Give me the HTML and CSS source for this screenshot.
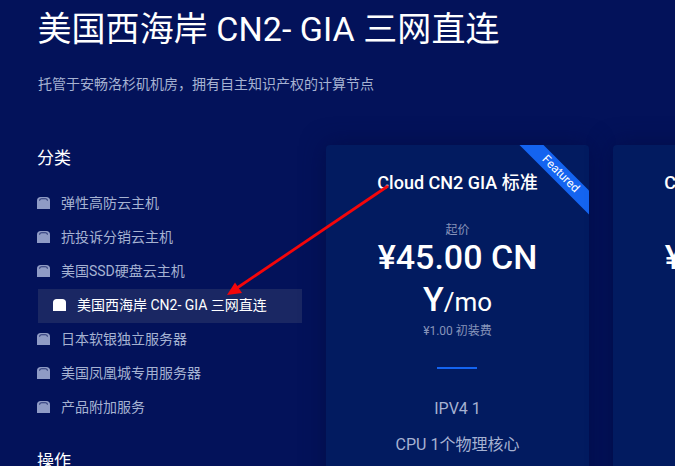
FILE: index.html
```html
<!DOCTYPE html>
<html lang="zh-CN">
<head>
<meta charset="utf-8">
<title>美国西海岸 CN2- GIA 三网直连</title>
<link rel="stylesheet" href="styles.css">
</head>
<body>
<svg width="0" height="0" class="defs">
  <symbol id="box" viewBox="0 0 13 12">
    <path d="M0 12V3.500C0 1.500 1.500 0 3.500 0h6C11.500 0 13 1.500 13 3.500V12Z" fill="currentColor"/>
    <path d="M2.500 3.700C2.700 2.400 3.500 1.800 4.500 1.800h4c1 0 1.800.6 2 1.900" fill="none" stroke="var(--slot)" stroke-width="1.100"/>
  </symbol>
</svg>
<main class="page">
  <header class="head">
    <h1>美国西海岸 CN2- GIA 三网直连</h1>
    <p>托管于安畅洛杉矶机房，拥有自主知识产权的计算节点</p>
  </header>
  <div class="layout">
    <aside class="side">
      <h2>分类</h2>
      <ul class="menu">
        <li><svg class="ic"><use href="#box"/></svg>弹性高防云主机</li>
        <li><svg class="ic"><use href="#box"/></svg>抗投诉分销云主机</li>
        <li><svg class="ic"><use href="#box"/></svg>美国SSD硬盘云主机</li>
        <li class="on"><svg class="ic"><use href="#box"/></svg>美国西海岸 CN2- GIA 三网直连</li>
        <li><svg class="ic"><use href="#box"/></svg>日本软银独立服务器</li>
        <li><svg class="ic"><use href="#box"/></svg>美国凤凰城专用服务器</li>
        <li><svg class="ic"><use href="#box"/></svg>产品附加服务</li>
      </ul>
      <h2 class="ops">操作</h2>
    </aside>
    <section class="cards">
      <article class="card">
        <div class="ribbon"><span>Featured</span></div>
        <h3>Cloud CN2 GIA 标准</h3>
        <div class="from">起价</div>
        <div class="price">¥45.00 CNY<small>/mo</small></div>
        <div class="setup">¥1.00 初装费</div>
        <hr class="rule">
        <ul class="spec">
          <li>IPV4 1</li>
          <li>CPU 1个物理核心</li>
        </ul>
      </article>
      <article class="card">
        <h3>Cloud CN2 GIA 标准</h3>
        <div class="from">起价</div>
        <div class="price">¥45.00 CNY<small>/mo</small></div>
      </article>
    </section>
  </div>
</main>
<svg class="arrow" width="675" height="466" viewBox="0 0 675 466">
  <line x1="388" y1="186" x2="237" y2="288" stroke="#f4060a" stroke-width="2.800"/>
  <path d="M227 295L235 282.500L242 293Z" fill="#f4060a"/>
</svg>
</body>
</html>
```
FILE: styles.css
```css
html, body { margin: 0; height: 100%; }
body {
  width: 675px;
  height: 466px;
  overflow: hidden;
  background: #03125a;
  color: #fff;
  font-family: Roboto, "Noto Sans CJK SC", sans-serif;
  position: relative;
}
.defs { position: absolute; }
.page { padding: 0 0 0 38px; width: 800px; }
.head h1 { margin: 0 0 0 -.5px; padding-top: 6px; font-size: 34px; line-height: 46px; font-weight: 400; letter-spacing: .05px; }
.head p { margin: 0; padding-top: 22px; font-size: 14px; line-height: 20px; color: #a6b2d2; }
.layout { display: flex; padding-top: 51px; }
.side { width: 264px; flex: none; }
.side h2 { margin: 0 0 0 -1px; padding-top: 3px; font-size: 17px; line-height: 20px; font-weight: 400; }
.menu { list-style: none; margin: 0; padding: 19px 0 0; }
.menu li {
  display: flex; align-items: center; height: 34px;
  box-sizing: border-box; padding-bottom: 4px;
  font-size: 14px; color: #a6b2d2;
  --slot: #2a3675;
}
.ic { width: 13px; height: 12px; margin: 2px 11px 0 -1px; color: #8f9bc5; flex: none; }
.menu .on { background: #1a2763; color: #fff; padding-left: 16px; --slot: #fff; }
.on .ic { color: #fff; }
.side .ops { padding-top: 26px; }
.cards { display: flex; gap: 24px; margin-left: 24px; }
.card {
  position: relative; overflow: hidden;
  width: 263px; height: 500px; flex: none;
  background: #021b60; border-radius: 4px;
  box-shadow: 0 0 24px rgba(2, 10, 60, .55);
  text-align: center;
  box-sizing: border-box; padding: 27px 45px 0;
}
.card h3 { margin: 0 -20px; font-size: 18px; line-height: 22px; font-weight: 500; white-space: nowrap; }
.from { margin-top: 28px; font-size: 12px; line-height: 16px; color: #8794ba; }
.price { font-size: 34px; line-height: 42px; font-weight: 500; word-break: break-all; margin-top: -2px; }
.price small { font-size: 26px; font-weight: 400; }
.setup { font-size: 12px; line-height: 16px; color: #8794ba; }
.rule { width: 40px; height: 2px; border: 0; background: #1464f0; margin: 28px 0 0 66px; }
.spec { list-style: none; margin: 0; padding: 22px 0 0; font-size: 16px; color: #a6b2d2; }
.spec li { height: 36px; line-height: 36px; white-space: nowrap; margin: 0 -20px; }
.ribbon {
  position: absolute; top: 23px; right: -27px;
  width: 106px; height: 17px; line-height: 16px;
  box-sizing: border-box; padding-right: 7px;
  background: #1464f0; transform: rotate(45deg);
  font-size: 12px; text-align: center;
}
.arrow { position: absolute; left: 0; top: 0; pointer-events: none; }
```
